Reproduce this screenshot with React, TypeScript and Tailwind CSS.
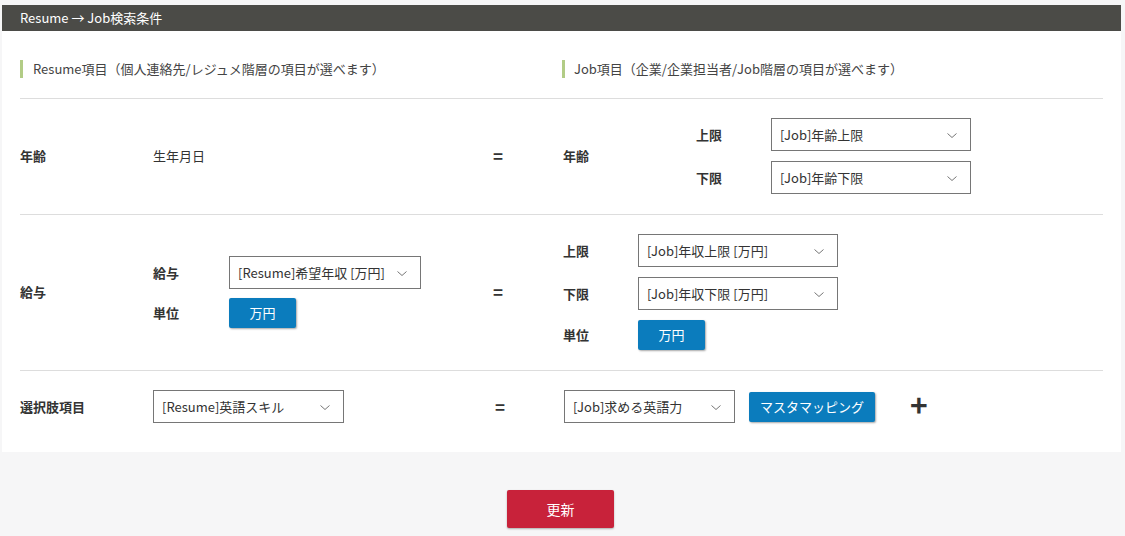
const font = { fontFamily: '"Noto Sans CJK JP", "Noto Sans", sans-serif' };

function Chevron() {
  return (
    <svg width="12" height="12" viewBox="0 0 12 12" fill="none" className="shrink-0">
      <path d="M1.5 4.5L6 8.5L10.5 4.5" stroke="#666" strokeWidth="0.9" />
    </svg>
  );
}

function FakeSelect({ label, w }: { label: string; w: string }) {
  return (
    <div className={`${w} h-[33px] border border-[#767676] bg-white flex items-center justify-between pl-2 pr-3 text-[13px] text-[#333]`}>
      <span className="whitespace-nowrap">{label}</span>
      <Chevron />
    </div>
  );
}

function BlueButton({ children, w }: { children: React.ReactNode; w: string }) {
  return (
    <div className={`${w} h-[30px] rounded-[2px] bg-[#0b7cbd] text-white text-[13px] flex items-center justify-center shadow-[1px_1px_2px_rgba(0,0,0,0.35)]`}>
      {children}
    </div>
  );
}

function Label({ children, w = 'w-[75px]' }: { children: React.ReactNode; w?: string }) {
  return <div className={`${w} shrink-0 font-bold text-[13px] text-[#333]`}>{children}</div>;
}

function Eq() {
  return <div className="w-[88px] shrink-0 pl-[18px] font-bold text-[17px] text-[#333]">=</div>;
}

export default function App() {
  return (
    <div className="w-[1125px] h-[536px] bg-[#f6f6f7] pt-[5px] pl-[2px]" style={font}>
      <div className="w-[1119px]">
        <div className="h-[26px] bg-[#4b4b47] text-white text-[13px] flex items-center pl-[18px]">
          Resume → Job検索条件
        </div>
        <div className="bg-white px-[18px] pt-[29px] pb-[29px]">
          {/* 見出し */}
          <div className="flex pb-[20px] border-b border-[#dddddd]">
            <div className="w-[542px] flex items-center h-[18px]">
              <div className="w-[3px] h-[18px] bg-[#b2cc86] mr-[10px]" />
              <span className="text-[13px] text-[#444]">Resume項目（個人連絡先/レジュメ階層の項目が選べます）</span>
            </div>
            <div className="flex items-center h-[18px]">
              <div className="w-[3px] h-[18px] bg-[#b2cc86] mr-[9px]" />
              <span className="text-[13px] text-[#444]">Job項目（企業/企業担当者/Job階層の項目が選べます）</span>
            </div>
          </div>

          {/* 年齢 */}
          <div className="flex items-center pt-[19px] pb-[20px] border-b border-[#dddddd]">
            <Label w="w-[133px]">年齢</Label>
            <div className="w-[322px] shrink-0 text-[13px] text-[#333]">生年月日</div>
            <Eq />
            <Label w="w-[133px]">年齢</Label>
            <div className="flex flex-col gap-[10px]">
              <div className="flex items-center">
                <Label>上限</Label>
                <FakeSelect label="[Job]年齢上限" w="w-[200px]" />
              </div>
              <div className="flex items-center">
                <Label>下限</Label>
                <FakeSelect label="[Job]年齢下限" w="w-[200px]" />
              </div>
            </div>
          </div>

          {/* 給与 */}
          <div className="flex items-center pt-[19px] pb-[20px] border-b border-[#dddddd]">
            <Label w="w-[133px]">給与</Label>
            <div className="w-[322px] shrink-0 flex flex-col gap-[9px]">
              <div className="flex items-center">
                <Label w="w-[76px]">給与</Label>
                <FakeSelect label="[Resume]希望年収 [万円]" w="w-[192px]" />
              </div>
              <div className="flex items-center">
                <Label w="w-[76px]">単位</Label>
                <BlueButton w="w-[67px]">万円</BlueButton>
              </div>
            </div>
            <Eq />
            <div className="flex flex-col gap-[10px]">
              <div className="flex items-center">
                <Label>上限</Label>
                <FakeSelect label="[Job]年収上限 [万円]" w="w-[200px]" />
              </div>
              <div className="flex items-center">
                <Label>下限</Label>
                <FakeSelect label="[Job]年収下限 [万円]" w="w-[200px]" />
              </div>
              <div className="flex items-center">
                <Label>単位</Label>
                <BlueButton w="w-[67px]">万円</BlueButton>
              </div>
            </div>
          </div>

          {/* 選択肢項目 */}
          <div className="flex items-center pt-[19px]">
            <Label w="w-[133px]">選択肢項目</Label>
            <div className="w-[322px] shrink-0">
              <FakeSelect label="[Resume]英語スキル" w="w-[191px]" />
            </div>
            <div className="w-[89px] shrink-0 pl-[20px] font-bold text-[17px] text-[#333]">=</div>
            <FakeSelect label="[Job]求める英語力" w="w-[171px]" />
            <div className="ml-[14px]">
              <BlueButton w="w-[126px]">マスタマッピング</BlueButton>
            </div>
            <div className="ml-[35px] font-bold text-[30px] leading-none text-[#333] -mt-[6px]">+</div>
          </div>
        </div>

        <div className="flex justify-center pt-[38px] pl-[1px] pr-[3px]">
          <div className="w-[107px] h-[38px] rounded-[2px] bg-[#c8223a] text-white text-[14px] flex items-center justify-center shadow-[0_1px_2px_rgba(0,0,0,0.3)]">
            更新
          </div>
        </div>
      </div>
    </div>
  );
}
